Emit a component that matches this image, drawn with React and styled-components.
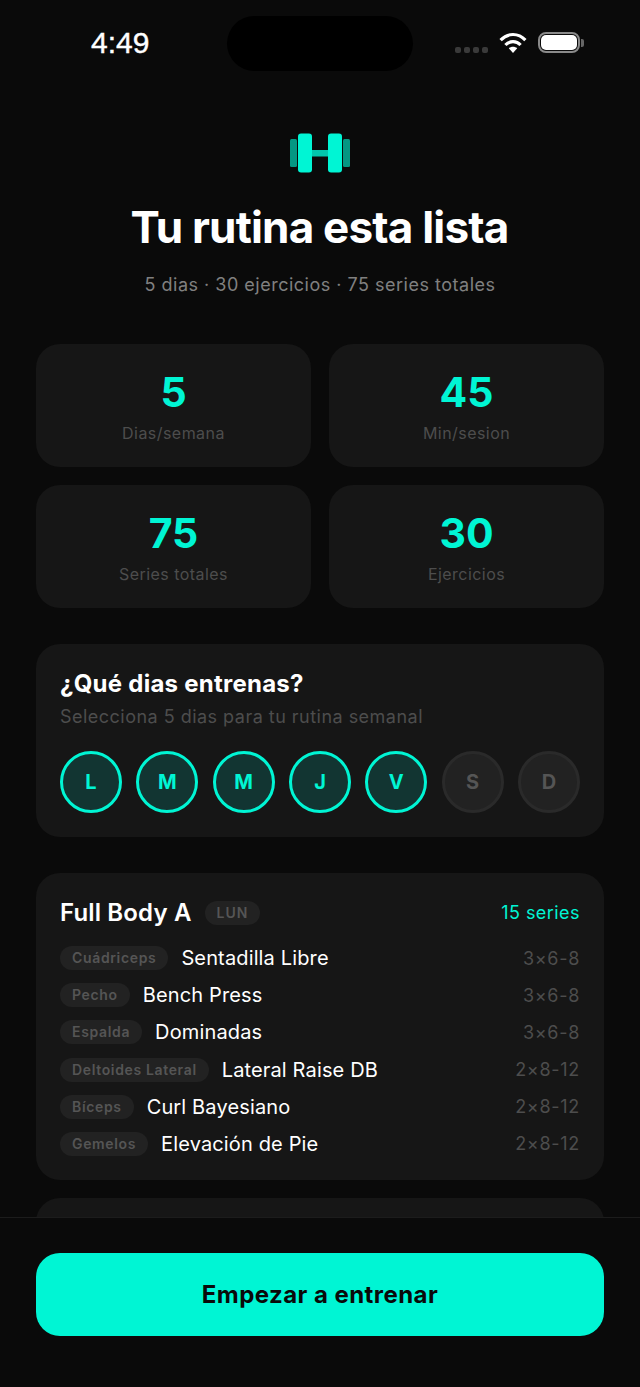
import styled, { createGlobalStyle } from 'styled-components';

const ACCENT = '#00f5d4';

const GlobalStyle = createGlobalStyle`
  html, body { margin: 0; padding: 0; background: #0a0a0a; }
  * { box-sizing: border-box; }
`;

const stats = [
  { value: '5', label: 'Dias/semana' },
  { value: '45', label: 'Min/sesion' },
  { value: '75', label: 'Series totales' },
  { value: '30', label: 'Ejercicios' },
];

const days = [
  { letter: 'L', active: true },
  { letter: 'M', active: true },
  { letter: 'M', active: true },
  { letter: 'J', active: true },
  { letter: 'V', active: true },
  { letter: 'S', active: false },
  { letter: 'D', active: false },
];

const exercises = [
  { muscle: 'Cuádriceps', name: 'Sentadilla Libre', sets: '3×6-8' },
  { muscle: 'Pecho', name: 'Bench Press', sets: '3×6-8' },
  { muscle: 'Espalda', name: 'Dominadas', sets: '3×6-8' },
  { muscle: 'Deltoides Lateral', name: 'Lateral Raise DB', sets: '2×8-12' },
  { muscle: 'Bíceps', name: 'Curl Bayesiano', sets: '2×8-12' },
  { muscle: 'Gemelos', name: 'Elevación de Pie', sets: '2×8-12' },
];

const DumbbellLogo = () => (
  <svg width="60" height="40" viewBox="0 0 60 40" fill={ACCENT}>
    <rect x="0" y="6" width="7" height="28" rx="1.5" opacity="0.6" />
    <rect x="53" y="6" width="7" height="28" rx="1.5" opacity="0.6" />
    <rect x="8" y="0.5" width="14" height="39" rx="3" />
    <rect x="38" y="0.5" width="14" height="39" rx="3" />
    <rect x="22" y="17" width="16" height="6.5" opacity="0.8" />
  </svg>
);

const WifiIcon = () => (
  <svg width="28" height="21" viewBox="0 0 28 21" fill="none" stroke="#fff" strokeWidth="3.2">
    <path d="M1.6 8.2C8.6 0.6 19.4 0.6 26.4 8.2" />
    <path d="M6.4 13C10.6 8.6 17.4 8.6 21.6 13" />
    <path d="M14 21L9.8 16.2C12 14.2 16 14.2 18.2 16.2Z" fill="#fff" stroke="none" />
  </svg>
);

const App = () => {
  return (
    <>
      <GlobalStyle />
      <Page>
        <StatusBar>
          <Time>4:49</Time>
          <Island />
          <StatusIcons>
            <Signal>
              <SignalDot />
              <SignalDot />
              <SignalDot />
              <SignalDot />
            </Signal>
            <WifiIcon />
            <Battery>
              <BatteryFill />
            </Battery>
          </StatusIcons>
        </StatusBar>

        <Scroll>
          <Hero>
            <DumbbellLogo />
            <Title>Tu rutina esta lista</Title>
            <Subtitle>5 dias · 30 ejercicios · 75 series totales</Subtitle>
          </Hero>

          <StatGrid>
            {stats.map((stat) => (
              <StatCard key={stat.label}>
                <StatValue>{stat.value}</StatValue>
                <StatLabel>{stat.label}</StatLabel>
              </StatCard>
            ))}
          </StatGrid>

          <DaysCard>
            <DaysTitle>¿Qué dias entrenas?</DaysTitle>
            <DaysHint>Selecciona 5 dias para tu rutina semanal</DaysHint>
            <DayRow>
              {days.map((day, i) => (
                <DayCircle key={i} $active={day.active}>
                  {day.letter}
                </DayCircle>
              ))}
            </DayRow>
          </DaysCard>

          <RoutineCard>
            <RoutineHeader>
              <RoutineName>Full Body A</RoutineName>
              <DayTag>LUN</DayTag>
              <SeriesCount>15 series</SeriesCount>
            </RoutineHeader>
            <ExerciseList>
              {exercises.map((exercise) => (
                <ExerciseRow key={exercise.name}>
                  <MuscleTag>{exercise.muscle}</MuscleTag>
                  <ExerciseName>{exercise.name}</ExerciseName>
                  <Sets>{exercise.sets}</Sets>
                </ExerciseRow>
              ))}
            </ExerciseList>
          </RoutineCard>

          <NextCard />
        </Scroll>

        <Footer>
          <StartButton type="button">Empezar a entrenar</StartButton>
        </Footer>
      </Page>
    </>
  );
};

export default App;

const Page = styled.div`
  display: flex;
  flex-direction: column;
  width: 640px;
  height: 1387px;
  overflow: hidden;
  background: #0a0a0a;
  font-family: Inter, 'Liberation Sans', sans-serif;
  color: #fff;
`;

const StatusBar = styled.div`
  flex: none;
  display: flex;
  align-items: flex-start;
  justify-content: space-between;
  height: 133px;
  padding: 16px 60px 0 91px;
`;

const Time = styled.div`
  width: 60px;
  margin-top: 11px;
  font-family: 'Liberation Sans', Arial, sans-serif;
  font-size: 30px;
  line-height: 32px;
  font-weight: 400;
  -webkit-text-stroke: 0.4px #fff;
`;

const Island = styled.div`
  width: 186px;
  height: 55px;
  margin-left: 76px;
  border-radius: 28px;
  background: #000;
`;

const StatusIcons = styled.div`
  display: flex;
  align-items: center;
  height: 21px;
  margin-top: 16px;
  margin-left: auto;
`;

const Signal = styled.div`
  display: flex;
  gap: 3px;
  margin: 14px 11px 0 0;
`;

const SignalDot = styled.span`
  width: 6px;
  height: 6px;
  border-radius: 2px;
  background: #3a3a3a;
`;

const Battery = styled.div`
  position: relative;
  width: 42px;
  height: 21px;
  margin-left: 11px;
  padding: 1px;
  border: 2px solid #8a8a8a;
  border-radius: 8px;

  &::after {
    content: '';
    position: absolute;
    top: 4.5px;
    right: -6px;
    width: 3px;
    height: 8px;
    border-radius: 0 2px 2px 0;
    background: #666;
  }
`;

const BatteryFill = styled.div`
  width: 100%;
  height: 100%;
  border-radius: 5px;
  background: #fff;
`;

const Scroll = styled.div`
  flex: 1;
  min-height: 0;
  overflow: hidden;
  padding: 0 36px;
`;

const Hero = styled.div`
  display: flex;
  flex-direction: column;
  align-items: center;
`;

const Title = styled.h1`
  margin: 27px 1px 0 0;
  font-size: 44px;
  line-height: 55px;
  font-weight: 700;
  letter-spacing: -0.8px;
`;

const Subtitle = styled.p`
  margin: 16px 0 0;
  font-size: 18px;
  line-height: 28px;
  letter-spacing: 0.5px;
  color: #808080;
`;

const StatGrid = styled.div`
  display: grid;
  grid-template-columns: 1fr 1fr;
  gap: 18.5px 18px;
  margin-top: 45px;
`;

const StatCard = styled.div`
  display: flex;
  flex-direction: column;
  align-items: center;
  height: 122.5px;
  padding-top: 23px;
  border-radius: 24px;
  background: #161616;
`;

const StatValue = styled.div`
  font-size: 41px;
  line-height: 50px;
  font-weight: 700;
  color: ${ACCENT};
`;

const StatLabel = styled.div`
  margin-top: 5px;
  font-size: 16px;
  line-height: 22px;
  letter-spacing: 0.45px;
  color: #4d4d4d;
`;

const DaysCard = styled.section`
  margin-top: 36.5px;
  padding: 25px 24px 24px;
  border-radius: 24px;
  background: #161616;
`;

const DaysTitle = styled.h2`
  margin: 0;
  font-size: 24px;
  line-height: 30px;
  font-weight: 700;
  letter-spacing: 0.25px;
`;

const DaysHint = styled.p`
  margin: 6px 0 0;
  font-size: 18px;
  line-height: 24px;
  letter-spacing: 0.48px;
  color: #4d4d4d;
`;

const DayRow = styled.div`
  display: flex;
  justify-content: space-between;
  margin-top: 22px;
`;

const DayCircle = styled.div`
  display: flex;
  align-items: center;
  justify-content: center;
  width: 62px;
  height: 62px;
  border-radius: 50%;
  border: 3px solid ${({ $active }) => ($active ? ACCENT : '#2a2a2a')};
  background: ${({ $active }) => ($active ? '#123532' : '#222222')};
  color: ${({ $active }) => ($active ? ACCENT : '#555555')};
  font-size: 20px;
  font-weight: 700;
`;

const RoutineCard = styled.section`
  margin-top: 36px;
  padding: 25px 24px 24px;
  border-radius: 24px;
  background: #161616;
`;

const RoutineHeader = styled.div`
  display: flex;
  align-items: center;
  height: 30px;
`;

const RoutineName = styled.h3`
  margin: 0;
  font-size: 24px;
  line-height: 30px;
  font-weight: 600;
  letter-spacing: 0.15px;
`;

const DayTag = styled.span`
  margin-left: 13px;
  padding: 0 12px;
  border-radius: 12px;
  background: #222222;
  color: #555555;
  font-size: 14px;
  line-height: 24px;
  font-weight: 600;
  letter-spacing: 1px;
`;

const SeriesCount = styled.span`
  margin-top: -1px;
  margin-left: auto;
  font-size: 18px;
  letter-spacing: 0.45px;
  color: ${ACCENT};
`;

const ExerciseList = styled.div`
  display: flex;
  flex-direction: column;
  gap: 13.2px;
  margin-top: 18px;
`;

const ExerciseRow = styled.div`
  display: flex;
  align-items: center;
  gap: 13px;
  height: 24px;
`;

const MuscleTag = styled.span`
  padding: 0 12px;
  border-radius: 12px;
  background: #222222;
  color: #555555;
  font-size: 14px;
  line-height: 24px;
  font-weight: 600;
  letter-spacing: 0.65px;
`;

const ExerciseName = styled.span`
  font-size: 20px;
  letter-spacing: 0.14px;
  color: #fff;
`;

const Sets = styled.span`
  margin-left: auto;
  font-size: 18px;
  letter-spacing: 0.7px;
  color: #4d4d4d;
`;

const NextCard = styled.div`
  height: 120px;
  margin-top: 18px;
  border-radius: 24px;
  background: #161616;
`;

const Footer = styled.footer`
  flex: none;
  height: 170px;
  padding: 35px 36px 0;
  border-top: 1px solid #1c1c1c;
  background: #0a0a0a;
`;

const StartButton = styled.button`
  display: block;
  width: 100%;
  height: 83px;
  border: none;
  border-radius: 24px;
  background: ${ACCENT};
  color: #0a0a0a;
  font-family: inherit;
  font-size: 24px;
  font-weight: 700;
  letter-spacing: 0.45px;
`;
